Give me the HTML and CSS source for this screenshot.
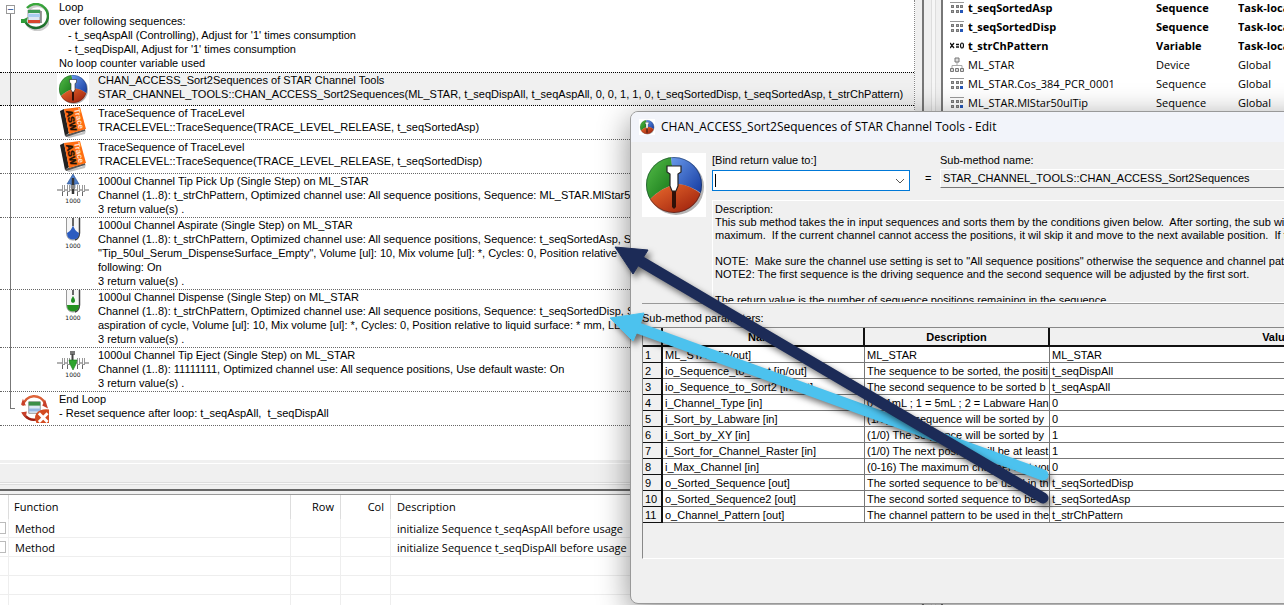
FILE: index.html
```html
<!DOCTYPE html>
<html lang="en">
<head>
<meta charset="utf-8">
<title>CHAN_ACCESS_Sort2Sequences of STAR Channel Tools - Edit</title>
<link rel="stylesheet" href="styles.css">
</head>
<body>
<svg class="defs" aria-hidden="true">
  <defs>
    <linearGradient id="gGreen" x1="0" y1="0" x2="1" y2="1"><stop offset="0" stop-color="#5fc850"/><stop offset="1" stop-color="#0a6a10"/></linearGradient>
    <linearGradient id="gBlue" x1="0" y1="0" x2="1" y2="1"><stop offset="0" stop-color="#6d9ff0"/><stop offset="1" stop-color="#0b2f96"/></linearGradient>
    <linearGradient id="gRed" x1="0" y1="0" x2="1" y2="1"><stop offset="0" stop-color="#f07030"/><stop offset="1" stop-color="#8e1206"/></linearGradient>
    <linearGradient id="gRing" x1="0" y1="0" x2="0" y2="1"><stop offset="0" stop-color="#3aa83c"/><stop offset="1" stop-color="#1d6b2c"/></linearGradient>
    <linearGradient id="gRingRed" x1="0" y1="0" x2="0" y2="1"><stop offset="0" stop-color="#e0653a"/><stop offset="1" stop-color="#9c1c10"/></linearGradient>
    <clipPath id="ball"><circle cx="32" cy="32" r="28"/></clipPath>
    <symbol id="sphere" viewBox="0 0 64 64">
      <rect width="64" height="64" fill="#fff"/>
      <circle cx="34" cy="34" r="28" fill="#b5b5b5"/>
      <g clip-path="url(#ball)">
        <path d="M0 0H29Q29 18 36 31Q20 33 6 48L0 50Z" fill="url(#gGreen)"/>
        <path d="M29 0H64V44Q50 32 36 31Q29 18 29 0Z" fill="url(#gBlue)"/>
        <path d="M4 50Q20 33 36 31Q50 32 62 44V64H4Z" fill="url(#gRed)"/>
      </g>
      <circle cx="32" cy="32" r="27.5" fill="none" stroke="#123" stroke-opacity=".45"/>
      <path d="M30 36H34V54L32 56L30 54Z" fill="#301008"/>
      <path d="M25 13H39V19L36 21V33L34 38H30L28 33V21L25 19Z" fill="#fff" stroke="#222" stroke-width="1.2"/>
    </symbol>
    <symbol id="book" viewBox="0 0 32 32">
      <path d="M8 30L24 27L29 24L28 28L12 32Z" fill="#c4c4c4"/>
      <path d="M3 5L7 3L12 27L8 30Z" fill="#222"/>
      <path d="M8 29L28 23L28 25L9 31Z" fill="#555"/>
      <path d="M7 3L23 1L29 23L12 28Z" fill="#ff6d12"/>
      <g font-family="Liberation Sans" font-weight="bold">
        <text transform="translate(9 5) rotate(77)" font-size="9" fill="#1c1008" stroke="#1c1008" stroke-width=".4">ASW</text>
        <text transform="translate(17 3) rotate(77)" font-size="8" fill="#ffe3cf">Trace</text>
      </g>
    </symbol>
    <symbol id="comb" viewBox="0 0 32 14">
      <path d="M0 6H32" stroke="#b2b2b2" stroke-width="2"/>
      <path d="M6.500 1V8M11.500 1V8M21.500 1V8M26.500 1V8" stroke="#999" stroke-width="3"/>
      <path d="M6.500 1V7M11.500 1V7M21.500 1V7M26.500 1V7" stroke="#fff"/>
      <path d="M5.500 8V12M10.500 8V12M20.500 8V12M25.500 8V12" stroke="#666"/>
    </symbol>
    <symbol id="seq" viewBox="0 0 14 12">
      <path d="M0 .5H14" stroke="#999"/>
      <path d="M1 3h3v3H1zM6 3h3v3H6zM10 3h3v3h-3zM1 8h3v3H1zM6 8h3v3H6z" fill="#777"/>
      <path d="M10 8h3v3h-3z" fill="#2456b8"/>
      <path d="M2 4h1v1H2zM7 4h1v1H7zM11 4h1v1h-1zM2 9h1v1H2zM7 9h1v1H7z" fill="#aaa"/>
    </symbol>
  </defs>
</svg>

<main class="workspace">
  <div class="left-column">
    <section class="tree-pane" aria-label="Method steps">
      <div class="tree">
        <article class="step step-root step-loop">
          <button class="toggle" aria-label="Collapse loop">&#8722;</button>
          <svg class="icon-root" viewBox="0 0 28 28">
            <path d="M5 20A12 12 0 1 0 7 5" fill="none" stroke="#ccc" stroke-width="3" transform="translate(1 1)"/>
            <path d="M4 18A12 12 0 1 0 6 5" fill="none" stroke="url(#gRing)" stroke-width="2.500"/>
            <path d="M0 16L0 20L5 20L7 14L3 16Z" fill="#2f9c38"/>
            <path d="M7 7h12v13H7z" fill="#dce8f4" stroke="#777" stroke-width=".7"/>
            <path d="M7 7h12v3H7z" fill="#3c9b55"/><path d="M7 11h12v3H7z" fill="#a8cdf0"/><path d="M7 17h12v3H7z" fill="#d8452c"/>
            <path d="M20 8v12" stroke="#777" stroke-width="1.500"/>
          </svg>
          <div class="step-text">
            <p>Loop</p><p>over following sequences:</p>
            <p class="nested">- t_seqAspAll (Controlling), Adjust for '1' times consumption</p>
            <p class="nested">- t_seqDispAll, Adjust for '1' times consumption</p>
            <p>No loop counter variable used</p>
          </div>
        </article>
        <article class="step selected">
          <svg class="icon"><use href="#sphere"/></svg>
          <div class="step-text"><p>CHAN_ACCESS_Sort2Sequences of STAR Channel Tools</p><p>STAR_CHANNEL_TOOLS::CHAN_ACCESS_Sort2Sequences(ML_STAR, t_seqDispAll, t_seqAspAll, 0, 0, 1, 1, 0, t_seqSortedDisp, t_seqSortedAsp, t_strChPattern)</p></div>
        </article>
        <article class="step">
          <svg class="icon"><use href="#book"/></svg>
          <div class="step-text"><p>TraceSequence of TraceLevel</p><p>TRACELEVEL::TraceSequence(TRACE_LEVEL_RELEASE, t_seqSortedAsp)</p></div>
        </article>
        <article class="step">
          <svg class="icon"><use href="#book"/></svg>
          <div class="step-text"><p>TraceSequence of TraceLevel</p><p>TRACELEVEL::TraceSequence(TRACE_LEVEL_RELEASE, t_seqSortedDisp)</p></div>
        </article>
        <article class="step">
          <svg class="icon" viewBox="0 0 32 32">
            <use href="#comb" y="10" width="32" height="14"/>
            <path d="M16 0L22 10H18V14H14V10H10Z" fill="#4c7bc4" stroke="#2d5596" stroke-width=".6"/>
            <path d="M16 4V20" stroke="#333" stroke-width="2.500"/><path d="M14 11h4v4h-4z" fill="#888"/>
            <text class="cap" x="16" y="29">1000</text>
          </svg>
          <div class="step-text"><p>1000ul Channel Tip Pick Up (Single Step) on ML_STAR</p><p>Channel (1..8): t_strChPattern, Optimized channel use: All sequence positions, Sequence: ML_STAR.MlStar50ulTip</p><p>3 return value(s) .</p></div>
        </article>
        <article class="step">
          <svg class="icon" viewBox="0 0 32 32">
            <path d="M9.500 0V15Q10 22 16 22T22.500 15V0" fill="#f6f6f6" stroke="#999"/>
            <path d="M22.500 0V15Q22 21 18 22" fill="none" stroke="#444" stroke-width="1.500"/>
            <path d="M16 7Q17 12 22 15Q22 21.500 16 21.500T10 15Q15 12 16 7Z" fill="#2c5cc0"/>
            <path d="M16 0V8" stroke="#666" stroke-width="2"/>
            <text class="cap" x="16" y="30">1000</text>
          </svg>
          <div class="step-text"><p>1000ul Channel Aspirate (Single Step) on ML_STAR</p><p>Channel (1..8): t_strChPattern, Optimized channel use: All sequence positions, Sequence: t_seqSortedAsp, Sequence</p><p>"Tip_50ul_Serum_DispenseSurface_Empty", Volume [ul]: 10, Mix volume [ul]: *, Cycles: 0, Position relative to liquid</p><p>following: On</p><p>3 return value(s) .</p></div>
        </article>
        <article class="step">
          <svg class="icon" viewBox="0 0 32 32">
            <path d="M9.500 0V15Q10 22 16 22T22.500 15V0" fill="#f6f6f6" stroke="#999"/>
            <path d="M22.500 0V15Q22 21 18 22" fill="none" stroke="#444" stroke-width="1.500"/>
            <path d="M10 15H22Q22 21.500 16 21.500T10 15Z" fill="#23901f"/>
            <path d="M16 0V5" stroke="#666" stroke-width="2"/>
            <path d="M16 6Q20 12 16 13Q12 12 16 6Z" fill="#1f8e22"/>
            <text class="cap" x="16" y="30">1000</text>
          </svg>
          <div class="step-text"><p>1000ul Channel Dispense (Single Step) on ML_STAR</p><p>Channel (1..8): t_strChPattern, Optimized channel use: All sequence positions, Sequence: t_seqSortedDisp, Sequence</p><p>aspiration of cycle, Volume [ul]: 10, Mix volume [ul]: *, Cycles: 0, Position relative to liquid surface: * mm, LLD</p><p>3 return value(s) .</p></div>
        </article>
        <article class="step">
          <svg class="icon" viewBox="0 0 32 32">
            <use href="#comb" y="9" width="32" height="14"/>
            <path d="M13 3h5v4h-5z" fill="#777"/><path d="M15.500 6V14" stroke="#444" stroke-width="2"/>
            <path d="M12 12H20L19 16L16 22L13 16Z" fill="#2fa52e" stroke="#137518" stroke-width=".6"/>
            <text class="cap" x="16" y="29">1000</text>
          </svg>
          <div class="step-text"><p>1000ul Channel Tip Eject (Single Step) on ML_STAR</p><p>Channel (1..8): 11111111, Optimized channel use: All sequence positions, Use default waste: On</p><p>3 return value(s) .</p></div>
        </article>
        <article class="step step-root">
          <svg class="icon-root icon-end" viewBox="0 0 29 29">
            <path d="M2 11A12 12 0 0 1 25 9M2 18A12 12 0 0 0 17 25" fill="none" stroke="url(#gRingRed)" stroke-width="2.500"/>
            <path d="M0 10L2 4L5 11Z M25 5L28 14L22 11Z M0 18L6 17L5 23Z" fill="#c8402a"/>
            <path d="M8 7h12v12H8z" fill="#dce8f4" stroke="#777" stroke-width=".7"/>
            <path d="M8 7h12v4H8z" fill="#3c8f48"/><path d="M8 14h12v3H8z" fill="#96b8e4"/>
            <path d="M29 15V29H16Q13 24 16 19Q20 14 29 15Z" fill="#d34c22"/>
            <path d="M18.500 19L27.500 28M27.500 19L18.500 28" stroke="#fff" stroke-width="3"/>
          </svg>
          <div class="step-text"><p>End Loop</p><p>- Reset sequence after loop: t_seqAspAll,&nbsp; t_seqDispAll</p></div>
        </article>
      </div>
    </section>
    <div class="scroll-strip"></div>
    <section class="errors" aria-label="Messages">
      <table class="list">
        <colgroup><col class="c-mark"><col class="c-function"><col class="c-num"><col class="c-num"><col></colgroup>
        <thead><tr><th></th><th>Function</th><th class="num">Row</th><th class="num">Col</th><th>Description</th></tr></thead>
        <tbody>
          <tr><td><span class="mark"></span></td><td>Method</td><td></td><td></td><td>initialize Sequence t_seqAspAll before usage</td></tr>
          <tr><td><span class="mark"></span></td><td>Method</td><td></td><td></td><td>initialize Sequence t_seqDispAll before usage</td></tr>
          <tr><td></td><td></td><td></td><td></td><td></td></tr>
          <tr><td></td><td></td><td></td><td></td><td></td></tr>
          <tr><td></td><td></td><td></td><td></td><td></td></tr>
        </tbody>
      </table>
    </section>
  </div>
  <div class="splitter"></div>
  <section class="variables" aria-label="Variables">
    <table class="vars">
      <colgroup><col class="v-icon"><col class="v-name"><col class="v-type"><col></colgroup>
      <tbody>
        <tr class="local"><td><svg class="vi"><use href="#seq"/></svg></td><td>t_seqSortedAsp</td><td>Sequence</td><td>Task-local</td></tr>
        <tr class="local"><td><svg class="vi"><use href="#seq"/></svg></td><td>t_seqSortedDisp</td><td>Sequence</td><td>Task-local</td></tr>
        <tr class="local"><td><svg class="vi" viewBox="0 0 14 12"><path d="M0 3L4 8M4 3L0 8M6 4.500H9M6 7H9" stroke="#111" stroke-width="1.300"/><ellipse cx="12" cy="5.500" rx="1.500" ry="2.500" fill="none" stroke="#111" stroke-width="1.200"/></svg></td><td>t_strChPattern</td><td>Variable</td><td>Task-local</td></tr>
        <tr><td><svg class="vi device" viewBox="0 0 14 16"><path d="M7 5V8M2 11V8.500H12V11" fill="none" stroke="#aaa"/><path d="M5 1h4v4H5zM.5 11.500h3v3h-3zM5.500 11.500h3v3h-3zM10.500 11.500h3v3h-3z" fill="#ddd" stroke="#777"/></svg></td><td>ML_STAR</td><td>Device</td><td>Global</td></tr>
        <tr><td><svg class="vi"><use href="#seq"/></svg></td><td>ML_STAR.Cos_384_PCR_0001</td><td>Sequence</td><td>Global</td></tr>
        <tr><td><svg class="vi"><use href="#seq"/></svg></td><td>ML_STAR.MlStar50ulTip</td><td>Sequence</td><td>Global</td></tr>
      </tbody>
    </table>
  </section>
</main>

<section class="dialog" role="dialog" aria-labelledby="dialog-title">
  <header class="titlebar">
    <svg class="title-icon"><use href="#sphere"/></svg>
    <h1 id="dialog-title">CHAN_ACCESS_Sort2Sequences of STAR Channel Tools - Edit</h1>
  </header>
  <div class="dialog-body">
    <div class="top-fields">
      <svg class="big-icon"><use href="#sphere"/></svg>
      <div class="details">
        <div class="binding">
          <div class="bind">
            <label for="bind">[Bind return value to:]</label>
            <div class="combo"><input id="bind" type="text"><span class="caret"></span><button aria-label="Show values"><svg viewBox="0 0 10 6"><path d="M1 1L5 5L9 1" fill="none" stroke="#555"/></svg></button></div>
          </div>
          <span class="equals">=</span>
          <div class="submethod">
            <label for="sub">Sub-method name:</label>
            <input id="sub" type="text" readonly value="STAR_CHANNEL_TOOLS::CHAN_ACCESS_Sort2Sequences">
          </div>
        </div>
        <div class="description">
          <p>Description:</p>
          <p>This sub method takes the in input sequences and sorts them by the conditions given below.&nbsp; After sorting, the sub will check</p>
          <p>maximum.&nbsp; If the current channel cannot access the positions, it wil skip it and move to the next available position.&nbsp; If the channel</p>
          <p>&nbsp;</p>
          <p>NOTE:&nbsp; Make sure the channel use setting is set to "All sequence positions" otherwise the sequence and channel patterns</p>
          <p>NOTE2: The first sequence is the driving sequence and the second sequence will be adjusted by the first sort.</p>
          <p>&nbsp;</p>
          <p>The return value is the number of sequence positions remaining in the sequence.</p>
        </div>
      </div>
    </div>
    <h2>Sub-method parameters:</h2>
    <div class="grid-frame">
      <table class="params">
        <colgroup><col class="p-index"><col class="p-name"><col class="p-desc"><col></colgroup>
        <thead><tr><th></th><th>Name</th><th>Description</th><th>Value</th></tr></thead>
        <tbody>
          <tr><th>1</th><td>ML_STAR [in/out]</td><td>ML_STAR</td><td>ML_STAR</td></tr>
          <tr><th>2</th><td>io_Sequence_to_Sort [in/out]</td><td>The sequence to be sorted, the positi</td><td>t_seqDispAll</td></tr>
          <tr><th>3</th><td>io_Sequence_to_Sort2 [in/out]</td><td>The second sequence to be sorted b</td><td>t_seqAspAll</td></tr>
          <tr><th>4</th><td>i_Channel_Type [in]</td><td>0 = 1mL ; 1 = 5mL ; 2 = Labware Han</td><td>0</td></tr>
          <tr><th>5</th><td>i_Sort_by_Labware [in]</td><td>(1/0) The sequence will be sorted by</td><td>0</td></tr>
          <tr><th>6</th><td>i_Sort_by_XY [in]</td><td>(1/0) The sequence will be sorted by</td><td>1</td></tr>
          <tr><th>7</th><td>i_Sort_for_Channel_Raster [in]</td><td>(1/0) The next position will be at least</td><td>1</td></tr>
          <tr><th>8</th><td>i_Max_Channel [in]</td><td>(0-16) The maximum channel that you</td><td>0</td></tr>
          <tr><th>9</th><td>o_Sorted_Sequence [out]</td><td>The sorted sequence to be used in th</td><td>t_seqSortedDisp</td></tr>
          <tr><th>10</th><td>o_Sorted_Sequence2 [out]</td><td>The second sorted sequence to be u</td><td>t_seqSortedAsp</td></tr>
          <tr><th>11</th><td>o_Channel_Pattern [out]</td><td>The channel pattern to be used in the</td><td>t_strChPattern</td></tr>
        </tbody>
      </table>
    </div>
  </div>
</section>

<svg class="arrows" viewBox="600 230 460 290" aria-hidden="true">
  <g class="arrow light"><path d="M638 328L1043 475" stroke-width="11" stroke-linecap="round"/><path d="M610 318L644 313L640 325L633 341Z"/></g>
  <g class="arrow dark"><path d="M640 261L1043 498" stroke-width="11" stroke-linecap="round"/><path d="M615 247L648 250L633 274Z"/></g>
</svg>
</body>
</html>
```
FILE: styles.css
```css
* { box-sizing: border-box; }
body {
  margin: 0;
  height: 100vh;
  position: relative;
  overflow: hidden;
  background: #f0f0f0;
  color: #000;
  font: 11px/14px "Liberation Sans", Arial, sans-serif;
}
p, h1, h2 { margin: 0; font-size: 11px; font-weight: normal; }
table { border-collapse: separate; border-spacing: 0; table-layout: fixed; width: 100%; }
th, td { padding: 0; font-weight: normal; text-align: left; white-space: nowrap; overflow: hidden; }
input, button { font: inherit; border: 0; padding: 0; border-radius: 0; outline: 0; }
svg { display: block; }
.defs { position: absolute; width: 0; height: 0; }

/* Workspace behind the dialog */
.workspace { display: flex; height: 100%; }
.left-column {
  flex: 1;
  min-width: 0;
  display: flex;
  flex-direction: column;
  border-right: 2px solid #777;
}
.tree-pane { padding-right: 7px; flex: none; overflow: hidden; }
.tree {
  position: relative;
  background: #fff;
  border-right: 1px dotted #888;
  padding-bottom: 34px;
}
.tree::before {
  content: "";
  position: absolute;
  z-index: 1;
  left: 10px;
  top: 14px;
  bottom: 51px;
  width: 4px;
  border: solid #777;
  border-width: 0 0 1px 1px;
}
.step {
  display: flex;
  gap: 9px;
  min-height: 34px;
  padding: 0 0 1px 57px;
  border-bottom: 1px dotted #666;
  white-space: nowrap;
}
.step-root { padding-left: 21px; gap: 10px; }
.step-loop { border-bottom-color: transparent; }
.selected {
  background: #f0f0f0;
  border-top: 1px dotted #000;
  border-bottom-color: #000;
  padding-bottom: 0;
}
.icon { flex: none; width: 32px; height: 32px; }
.icon-root { flex: none; width: 28px; height: 28px; margin-top: 3px; }
.nested { padding-left: 9px; }
.cap { font: 6px "DejaVu Sans", sans-serif; text-anchor: middle; fill: #111; }
.toggle {
  position: absolute;
  z-index: 2;
  left: 6px;
  top: 5px;
  width: 9px;
  height: 9px;
  border: 1px solid #999;
  background: #fff;
  color: #24488f;
  line-height: 7px;
}
.scroll-strip {
  flex: none;
  height: 31px;
  background: #f0f0f0;
  border-top: 3px solid #f0f0f0;
  border-bottom: 2px solid #666;
  box-shadow: inset 0 1px #fff, inset 0 -4px #f0f0f0, inset 0 -5px #ddd, inset 0 -6px #fafafa, inset 0 -7px #ddd;
}
.errors {
  flex: 1;
  min-height: 0;
  margin-top: 3px;
  border-top: 1px solid #999;
  background: #fff;
  overflow: hidden;
}
.list, .vars { font: 11px/16px "Open Sans", sans-serif; }
.c-mark { width: 9px; }
.c-function { width: 282px; }
.c-num { width: 50px; }
.list th { height: 24px; border-right: 1px solid #ddd; padding-left: 5px; }
.list th:first-child, .list td:first-child { padding: 0; }
.list th.num { text-align: right; padding: 0 6px 0 0; }
.list td { height: 19px; border-right: 1px solid #eee; border-bottom: 1px solid #eee; padding: 2px 0 0 6px; }
.list th:last-child { padding-left: 6px; }
.mark { display: block; width: 6px; height: 12px; border: 1px solid #bbb; border-left: 0; }
.splitter {
  flex: none;
  width: 17px;
  border-left: 7px solid #f0f0f0;
  background: #f0f0f0;
  box-shadow: inset 1px 0 #ddd, inset 4px 0 #f6f6f6, inset 5px 0 #ddd;
}
.variables {
  flex: none;
  width: 343px;
  border-left: 2px solid #777;
  padding-left: 7px;
  background: #fff;
  overflow: hidden;
}
.v-icon { width: 18px; }
.v-name { width: 188px; }
.v-type { width: 82px; }
.vars td { height: 19px; padding-bottom: 3px; }
.vars .local td { font-weight: bold; }
.vi { width: 14px; height: 12px; }
.device { height: 16px; }

/* Dialog */
.dialog {
  position: absolute;
  left: 630px;
  right: -240px;
  top: 111px;
  bottom: 1px;
  display: flex;
  flex-direction: column;
  background: #f0f0f0;
  border: 1px solid #999;
  border-radius: 8px;
  overflow: hidden;
  box-shadow: 0 8px 32px rgba(0, 0, 0, .45);
}
.titlebar {
  flex: none;
  display: flex;
  align-items: center;
  gap: 6px;
  height: 30px;
  padding-left: 8px;
  background: #f2f4fa;
}
.titlebar h1 { font: 12px/16px "Open Sans", sans-serif; }
.title-icon { width: 16px; height: 16px; }
.dialog-body { flex: 1; padding: 11px 17px 0 11px; }
.top-fields { display: flex; gap: 6px; }
.big-icon { flex: none; width: 64px; height: 64px; }
.details { flex: 1; min-width: 0; }
.binding { display: flex; }
.bind { width: 198px; }
.binding label { display: block; }
.combo {
  position: relative;
  display: flex;
  height: 21px;
  margin-top: 3px;
  background: #fff;
  border: 1px solid #0078d7;
}
.combo input { flex: 1; min-width: 0; background: none; padding-left: 4px; }
.combo button { width: 18px; background: none; padding: 0 4px; }
.caret { position: absolute; left: 2px; top: 3px; width: 1px; height: 13px; background: #000; }
.equals { width: 30px; padding: 18px 0 0 15px; }
.submethod { flex: 1; }
.submethod input {
  display: block;
  width: 100%;
  height: 19px;
  margin-top: 2px;
  padding: 0 0 2px 2px;
  background: #f0f0f0;
  border: 1px solid #fff;
  border-right: 0;
  border-bottom-color: #777;
}
.description {
  height: 103px;
  margin-top: 9px;
  padding: 2px 0 0 2px;
  border: 1px solid #fff;
  border-right: 0;
  line-height: 13px;
  white-space: nowrap;
  overflow: hidden;
}
.dialog h2 { border-top: 1px solid #999; margin: 0 0 2px; padding-top: 7px; }
.grid-frame {
  height: 232px;
  border: 1px solid #888;
  border-bottom: 1px solid #fff;
}
.p-index { width: 20px; }
.p-name { width: 202px; }
.p-desc { width: 185px; }
.params thead th {
  height: 19px;
  background: #f0f0f0;
  font-weight: bold;
  text-align: center;
  border-right: 2px solid #111;
  border-bottom: 2px solid #111;
}
.params tbody th, .params tbody td { height: 16px; line-height: 14px; padding-left: 2px; }
.params tbody td {
  background: #fff;
  border-right: 1px solid #777;
  border-bottom: 1px solid #777;
}
.params tbody th { border-right: 2px solid #111; border-bottom: 1px solid #111; }

/* Annotation arrows over both windows */
.arrows { position: absolute; left: 600px; top: 230px; width: 460px; height: 290px; overflow: visible; pointer-events: none; }
.arrow { filter: drop-shadow(3px 4px 3px rgba(0, 0, 0, .55)); }
.light { fill: #4cc2ee; stroke: #4cc2ee; }
.dark { fill: #1c2b57; stroke: #1c2b57; }
```
